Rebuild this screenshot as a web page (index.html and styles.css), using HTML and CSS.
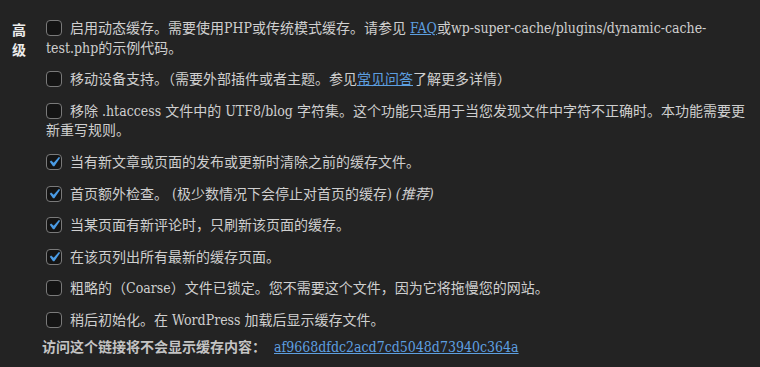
FILE: index.html
```html
<!DOCTYPE html>
<html lang="zh-CN">
<head>
<meta charset="utf-8">
<title>高级</title>
<link rel="stylesheet" href="styles.css">
</head>
<body>
<div class="settings">
  <div class="th">高级</div>
  <div class="td">
    <label class="opt"><span class="cb"></span>启用动态缓存。需要使用PHP或传统模式缓存。请参见 <a href="#">FAQ</a>或wp-super-cache/plugins/dynamic-cache-test.php的示例代码。</label>
    <label class="opt"><span class="cb"></span>移动设备支持。（需要外部插件或者主题。参见<a href="#">常见问答</a>了解更多详情）</label>
    <label class="opt"><span class="cb"></span>移除 .htaccess 文件中的 UTF8/blog 字符集。这个功能只适用于当您发现文件中字符不正确时。本功能需要更新重写规则。</label>
    <label class="opt"><span class="cb on"><svg viewBox="0 0 20 20"><path d="M14.83 4.89l1.34.94-5.81 8.38H9.02L5.78 9.67l1.34-1.25 2.57 2.4z"/></svg></span>当有新文章或页面的发布或更新时清除之前的缓存文件。</label>
    <label class="opt"><span class="cb on"><svg viewBox="0 0 20 20"><path d="M14.83 4.89l1.34.94-5.81 8.38H9.02L5.78 9.67l1.34-1.25 2.57 2.4z"/></svg></span>首页额外检查。 (极少数情况下会停止对首页的缓存) <em>(推荐)</em></label>
    <label class="opt"><span class="cb on"><svg viewBox="0 0 20 20"><path d="M14.83 4.89l1.34.94-5.81 8.38H9.02L5.78 9.67l1.34-1.25 2.57 2.4z"/></svg></span>当某页面有新评论时，只刷新该页面的缓存。</label>
    <label class="opt"><span class="cb on"><svg viewBox="0 0 20 20"><path d="M14.83 4.89l1.34.94-5.81 8.38H9.02L5.78 9.67l1.34-1.25 2.57 2.4z"/></svg></span>在该页列出所有最新的缓存页面。</label>
    <label class="opt"><span class="cb"></span>粗略的（Coarse）文件已锁定。您不需要这个文件，因为它将拖慢您的网站。</label>
    <label class="opt last"><span class="cb"></span>稍后初始化。在 WordPress 加载后显示缓存文件。</label>
    <p class="url"><strong>访问这个链接将不会显示缓存内容：</strong> <a class="hash" href="#">af9668dfdc2acd7cd5048d73940c364a</a></p>
  </div>
</div>
</body>
</html>
```

FILE: styles.css
```css
html, body {
  margin: 0;
  padding: 0;
  background: #232323;
}
body {
  width: 760px;
  height: 367px;
  overflow: hidden;
  font-family: "DejaVu Serif", "Noto Sans CJK SC", serif;
  font-stretch: condensed;
  font-size: 14px;
  line-height: 19.6px;
  color: #cfcfcf;
}
.settings {
  display: flex;
  align-items: flex-start;
  padding: 19px 0 0 12px;
}
.th {
  width: 14px;
  flex: none;
  line-height: 20px;
  font-family: "Noto Sans CJK SC", sans-serif;
  font-weight: bold;
  color: #ececec;
}
.td {
  margin-left: 16px;
  width: 707px;
}
.opt {
  display: block;
  padding-left: 4px;
  margin-bottom: 12px;
}
.opt.last {
  margin-bottom: 6px;
}
.cb {
  display: inline-block;
  box-sizing: border-box;
  width: 16px;
  height: 16px;
  margin-right: 8px;
  border: 1px solid #7a7a7a;
  border-radius: 4px;
  background: #141414;
  vertical-align: -3px;
}
.cb svg {
  display: block;
  width: 20px;
  height: 20px;
  margin: -3px 0 0 -3px;
  fill: #4a9be4;
}
a {
  color: #5d9fe0;
  text-decoration: underline;
}
em {
  font-style: italic;
}
.url {
  margin: 0;
}
.url strong {
  font-family: "Noto Sans CJK SC", sans-serif;
  font-weight: bold;
  color: #c4c4c4;
}
.url .hash {
  margin-left: 4px;
}
```
